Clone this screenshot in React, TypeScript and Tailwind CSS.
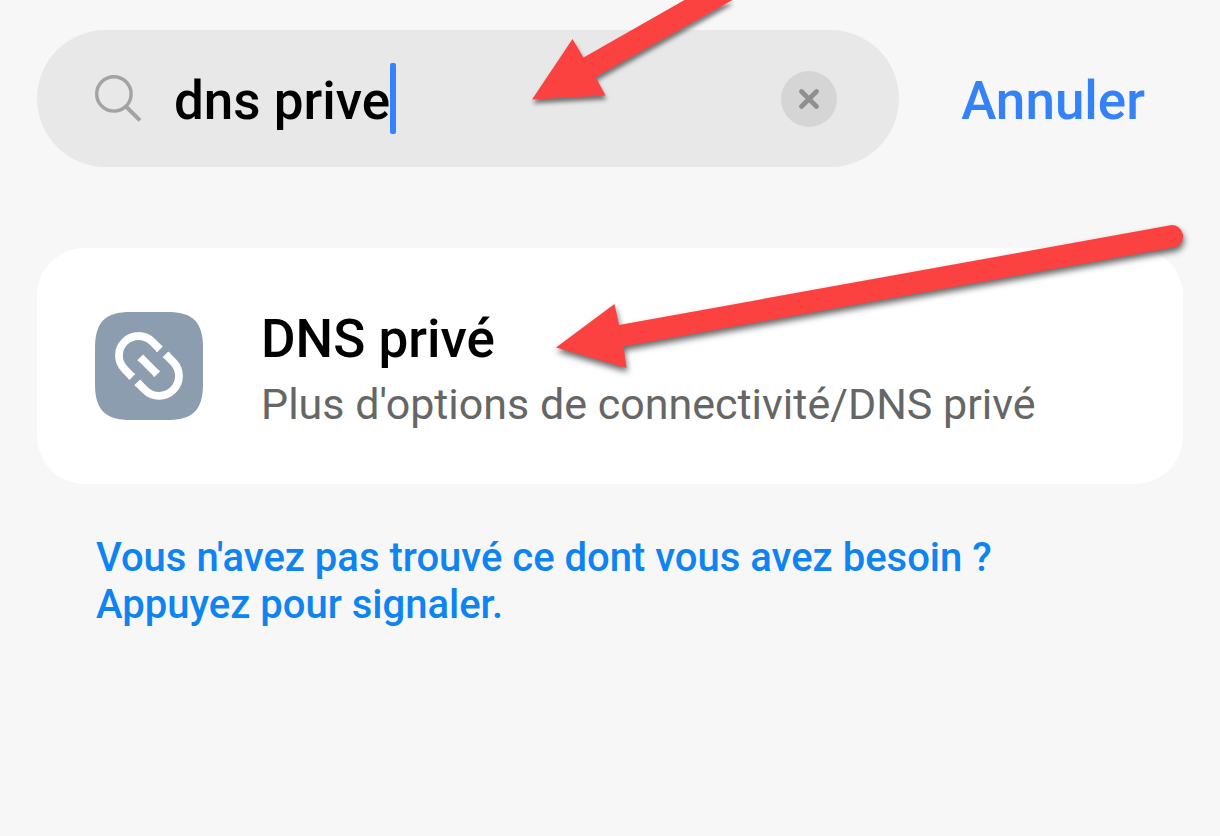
import { useState } from "react";

function SearchIcon() {
  return (
    <svg viewBox="0 0 48 48" className="size-12 shrink-0" fill="none" stroke="#a3a3a3" aria-hidden="true">
      <circle cx="19.9" cy="18.9" r="17.2" strokeWidth="3.4" />
      <path d="M32.4 32 L46 45.4" strokeWidth="4" />
    </svg>
  );
}

function LinkIcon() {
  return (
    <svg viewBox="0 0 108 108" className="size-[108px] shrink-0" aria-hidden="true">
      <path
        d="M0 36C0 10 10 0 36 0H72C98 0 108 10 108 36V72C108 98 98 108 72 108H36C10 108 0 98 0 72Z"
        fill="#8c9db0"
      />
      <g fill="none" stroke="#fff" strokeWidth="7.8" strokeLinejoin="round">
        <path d="M64.3 36.7 L57.3 29.7 A19.5 19.5 0 0 0 29.7 57.3 L36.5 64.3" />
        <path d="M43 71 L50 78 A19.5 19.5 0 0 0 78.2 50 L71.3 43" />
        <path d="M46 46 L61.5 61.5" />
      </g>
      <g fill="#fff" stroke="#fff" strokeWidth="2" strokeLinecap="round">
        <path d="M62 39 L66.6 34.4 M34.4 66.6 L39 62 M40.7 73.3 L45.3 68.7 M69 45.3 L73.6 40.7 M43.7 48.3 L48.3 43.7 M59.2 63.8 L63.8 59.2" />
      </g>
    </svg>
  );
}

export default function App() {
  const [query, setQuery] = useState("dns prive");

  return (
    <main className="min-h-screen overflow-hidden bg-[#f7f7f7] px-[37px] pt-[30px] font-['Roboto',sans-serif] text-black">
      <form className="flex items-center" onSubmit={(e) => e.preventDefault()}>
        <div className="relative flex h-[137px] min-w-0 flex-1 items-center rounded-full bg-[#e8e8e8] pr-[62px] pl-[57px]">
          <SearchIcon />
          <div className="ml-8 flex min-w-0 flex-1 items-center">
            <input
              type="text"
              aria-label="Rechercher"
              value={query}
              onChange={(e) => setQuery(e.target.value)}
              className="h-[71px] min-w-0 bg-transparent p-0 pt-1.5 text-[53px] font-medium caret-transparent outline-none [field-sizing:content]"
            />
            <span className="h-[71px] w-[6px] shrink-0 rounded-xs bg-[#3482ff]" />
          </div>
          <button
            type="button"
            aria-label="Effacer"
            onClick={() => setQuery("")}
            className="flex size-14 shrink-0 items-center justify-center rounded-full bg-[#d5d5d5]"
          >
            <svg viewBox="0 0 20 20" className="size-5" stroke="#8f8f8f" strokeWidth="4.6" strokeLinecap="round" aria-hidden="true">
              <path d="M2.5 2.5 L17.5 17.5 M17.5 2.5 L2.5 17.5" />
            </svg>
          </button>
          <svg
            viewBox="0 0 240 120"
            className="pointer-events-none absolute -top-[30px] left-[483px] h-[120px] w-[240px] drop-shadow-[1px_4px_2px_rgba(0,0,0,0.5)]"
            aria-hidden="true"
          >
            <path d="M12 99.5 L52.5 39 L63.5 57.5 L168 -2 L216 -2 L75.5 77 L85.5 95.5 Z" fill="#fc4141" />
          </svg>
        </div>
        <button type="button" className="pt-1.5 pr-[38px] pl-[62px] text-[53px] font-medium text-[#3482f6]">
          Annuler
        </button>
      </form>

      <a href="#dns" className="relative mt-[81px] flex h-[236px] items-center rounded-[48px] bg-white pr-8 pl-[58px]">
        <LinkIcon />
        <span className="ml-[58px] flex flex-col pt-2.5">
          <span className="text-[53px] leading-[66px] font-medium">DNS privé</span>
          <span className="text-[43px] leading-[64px] text-[#666]">Plus d'options de connectivité/DNS privé</span>
        </span>
        <svg
          viewBox="0 0 640 160"
          className="pointer-events-none absolute -top-[28px] left-[513px] h-[160px] w-[640px] drop-shadow-[1px_4px_3px_rgba(0,0,0,0.6)]"
          aria-hidden="true"
        >
          <path
            d="M6 127.5 L64.5 84 L69 105 L620.5 5.2 A11.2 11.2 0 0 1 624.5 27.2 L73.5 126.5 L76.5 148 Z"
            fill="#fc4141"
          />
        </svg>
      </a>

      <a href="#signaler" className="mt-[50px] ml-[59px] block text-[40px] leading-[47px] font-medium text-[#0d84f2]">
        Vous n'avez pas trouvé ce dont vous avez besoin ?
        <br />
        Appuyez pour signaler.
      </a>
    </main>
  );
}
